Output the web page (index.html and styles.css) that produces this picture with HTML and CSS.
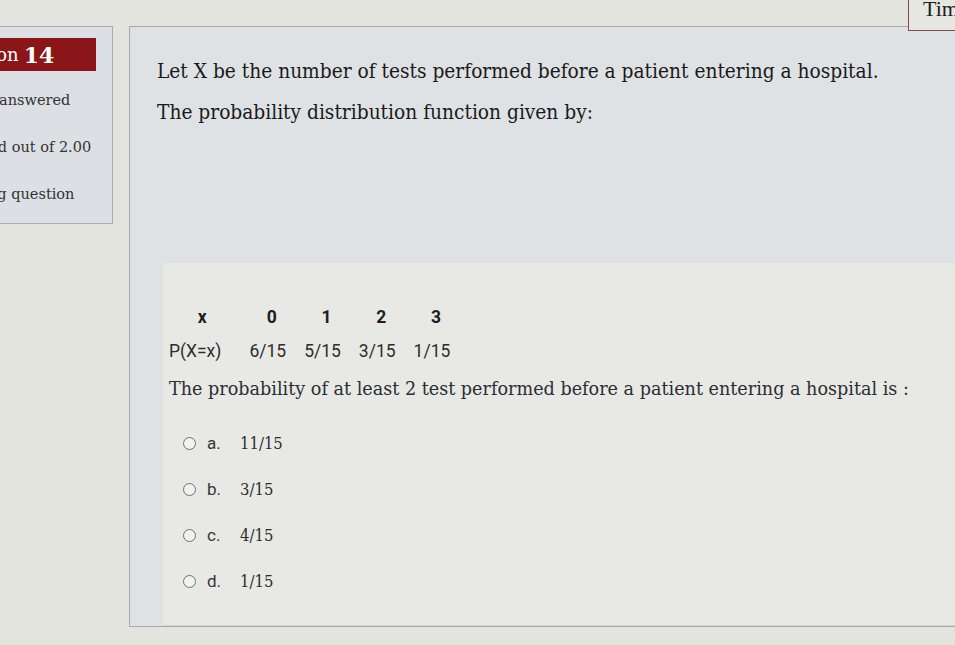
FILE: index.html
```html
<!DOCTYPE html>
<html lang="en">
<head>
<meta charset="utf-8">
<title>Question 14</title>
<link rel="stylesheet" href="styles.css">
</head>
<body>
<div class="timer">Time left</div>
<div class="page">
  <aside class="info">
    <h3 class="qno">Question <span class="num">14</span></h3>
    <div class="line state">Not yet answered</div>
    <div class="line grade">Marked out of 2.00</div>
    <div class="line flag">Flag question</div>
  </aside>
  <main class="content">
    <div class="qtext">
      <p>Let X be the number of tests performed before a patient entering a hospital.</p>
      <p>The probability distribution function given by:</p>
    </div>
    <div class="ablock">
      <table class="dist">
        <tr class="head"><td>x</td><td>0</td><td>1</td><td>2</td><td>3</td></tr>
        <tr><td>P(X=x)</td><td>6/15</td><td>5/15</td><td>3/15</td><td>1/15</td></tr>
      </table>
      <p class="prompt">The probability of at least 2 test performed before a patient entering a hospital is :</p>
      <div class="answers">
        <label class="opt"><span class="radio"></span><span class="letter">a.</span><span class="val">11/15</span></label>
        <label class="opt"><span class="radio"></span><span class="letter">b.</span><span class="val">3/15</span></label>
        <label class="opt"><span class="radio"></span><span class="letter">c.</span><span class="val">4/15</span></label>
        <label class="opt"><span class="radio"></span><span class="letter">d.</span><span class="val">1/15</span></label>
      </div>
    </div>
  </main>
</div>
</body>
</html>
```

FILE: styles.css
```css
html, body {
  margin: 0;
  padding: 0;
}
body {
  width: 955px;
  height: 645px;
  overflow: hidden;
  background: #e3e4de;
  font-family: "DejaVu Serif", serif;
  color: #222;
  position: relative;
}

.timer {
  position: absolute;
  top: -6px;
  left: 908px;
  width: 90px;
  height: 37px;
  box-sizing: border-box;
  border: 1px solid #86484a;
  background: #e6e7e2;
  padding: 0 0 0 14px;
  font-family: "Liberation Serif", serif;
  font-size: 22px;
  line-height: 28px;
  color: #1e1e1e;
  white-space: nowrap;
}

.page {
  display: flex;
  align-items: flex-start;
  padding-top: 26px;
}

.info {
  margin-left: -74px;
  width: 187px;
  height: 198px;
  box-sizing: border-box;
  border: 1px solid #a8acaf;
  background: #dcdfe3;
  padding-top: 11px;
  flex: none;
}
.qno {
  margin: 0 16px 0 0;
  height: 33px;
  background: #8b1619;
  color: #fff;
  font-weight: normal;
  font-size: 18px;
  display: flex;
  align-items: center;
  padding-left: 10px;
  white-space: nowrap;
  font-family: "DejaVu Serif", serif;
}
.qno .num {
  font-weight: bold;
  font-size: 22px;
  margin-left: 5px;
}
.line {
  font-size: 14.5px;
  color: #333;
  white-space: nowrap;
  height: 47px;
  line-height: 47px;
}
.state { margin-top: 6px; padding-left: 13px; }
.grade { padding-left: 23px; }
.flag { padding-left: 47px; }

.content {
  flex: 1;
  margin-left: 16px;
  margin-right: -30px;
  height: 601px;
  box-sizing: border-box;
  border: 1px solid #a6aaad;
  background: #dfe2e4;
  padding: 24px 0 0 27px;
  display: flex;
  flex-direction: column;
}

.qtext p {
  margin: 0;
  font-family: "DejaVu Serif", serif;
  font-stretch: condensed;
  font-size: 20.7px;
  line-height: 41px;
  color: #1a1a1a;
  white-space: nowrap;
}

.ablock {
  margin: 130px 0 0 6px;
  flex: 1;
  background: #e8e9e4;
  padding: 37px 0 0 6px;
  border-bottom: 1px solid #d2d4d0;
}

.dist {
  border-collapse: collapse;
  font-family: Roboto, "Liberation Sans", sans-serif;
  font-size: 17.5px;
  color: #2d2d2d;
}
.dist td {
  padding: 0 9px;
  height: 34px;
  text-align: center;
}
.dist td:first-child {
  padding-left: 0;
  padding-right: 19px;
}
.dist .head td {
  font-weight: bold;
  color: #1e1e1e;
  padding: 0 5px 0 13px;
}
.dist .head td:first-child {
  padding: 0 19px 0 14px;
}

.prompt {
  margin: 11px 0 0;
  font-family: "DejaVu Serif", serif;
  font-size: 17.6px;
  color: #2a2e36;
  white-space: nowrap;
}

.answers {
  margin-top: 33px;
  margin-left: 14px;
  display: flex;
  flex-direction: column;
  gap: 24px;
}
.opt {
  display: flex;
  align-items: center;
  height: 22px;
}
.radio {
  width: 11px;
  height: 11px;
  border: 1.5px solid #6d6f72;
  border-radius: 50%;
  background: #f1f2ee;
  flex: none;
}
.letter {
  margin-left: 11px;
  width: 33px;
  font-family: Roboto, "Liberation Sans", sans-serif;
  font-size: 17px;
  color: #34363a;
}
.val {
  font-family: "DejaVu Serif", serif;
  font-stretch: condensed;
  font-size: 16.5px;
  color: #2b2d31;
}
```
